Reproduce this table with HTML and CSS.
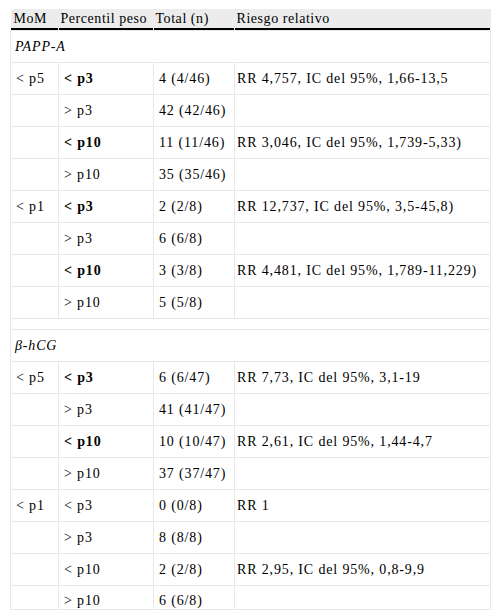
FILE: index.html
```html
<!DOCTYPE html>
<html lang="es">
<head>
<meta charset="utf-8">
<link rel="stylesheet" href="styles.css">
</head>
<body>
<div class="wrap">
<table class="tbl">
  <colgroup>
    <col class="c-mom">
    <col class="c-pct">
    <col class="c-tot">
    <col class="c-rr">
  </colgroup>
  <thead>
    <tr><th>MoM</th><th>Percentil peso</th><th>Total (n)</th><th>Riesgo relativo</th></tr>
  </thead>
  <tbody>
    <tr class="group"><td colspan="4"><i>PAPP-A</i></td></tr>
    <tr><td>&lt; p5</td><td><b>&lt; p3</b></td><td>4 (4/46)</td><td>RR 4,757, IC del 95%, 1,66-13,5</td></tr>
    <tr><td></td><td>&gt; p3</td><td>42 (42/46)</td><td></td></tr>
    <tr><td></td><td><b>&lt; p10</b></td><td>11 (11/46)</td><td>RR 3,046, IC del 95%, 1,739-5,33)</td></tr>
    <tr><td></td><td>&gt; p10</td><td>35 (35/46)</td><td></td></tr>
    <tr><td>&lt; p1</td><td><b>&lt; p3</b></td><td>2 (2/8)</td><td>RR 12,737, IC del 95%, 3,5-45,8)</td></tr>
    <tr><td></td><td>&gt; p3</td><td>6 (6/8)</td><td></td></tr>
    <tr><td></td><td><b>&lt; p10</b></td><td>3 (3/8)</td><td>RR 4,481, IC del 95%, 1,789-11,229)</td></tr>
    <tr><td></td><td>&gt; p10</td><td>5 (5/8)</td><td></td></tr>
    <tr class="spacer"><td colspan="4"></td></tr>
    <tr class="group"><td colspan="4"><i>β-hCG</i></td></tr>
    <tr><td>&lt; p5</td><td><b>&lt; p3</b></td><td>6 (6/47)</td><td>RR 7,73, IC del 95%, 3,1-19</td></tr>
    <tr><td></td><td>&gt; p3</td><td>41 (41/47)</td><td></td></tr>
    <tr><td></td><td><b>&lt; p10</b></td><td>10 (10/47)</td><td>RR 2,61, IC del 95%, 1,44-4,7</td></tr>
    <tr><td></td><td>&gt; p10</td><td>37 (37/47)</td><td></td></tr>
    <tr><td>&lt; p1</td><td>&lt; p3</td><td>0 (0/8)</td><td>RR 1</td></tr>
    <tr><td></td><td>&gt; p3</td><td>8 (8/8)</td><td></td></tr>
    <tr><td></td><td>&lt; p10</td><td>2 (2/8)</td><td>RR 2,95, IC del 95%, 0,8-9,9</td></tr>
    <tr class="last"><td></td><td>&gt; p10</td><td>6 (6/8)</td><td></td></tr>
  </tbody>
</table>
</div>
</body>
</html>
```
FILE: styles.css
```css
html, body {
  margin: 0;
  padding: 0;
  background: #fff;
}
.wrap {
  padding: 9px 10px 0 10px;
}
.tbl {
  width: 480px;
  border-collapse: collapse;
  table-layout: fixed;
  font-family: "Liberation Serif", "Times New Roman", serif;
  font-size: 14px;
  letter-spacing: 0.85px;
  color: #000;
}
.c-mom { width: 48px; }
.c-pct { width: 95px; }
.c-tot { width: 81px; }
.c-rr { width: 256px; }
.tbl th {
  font-weight: normal;
  text-align: left;
  height: 19px;
  padding: 0 2px 2px 2px;
  line-height: 17px;
  letter-spacing: 0.55px;
  background: linear-gradient(#000, #000) left bottom / calc(100% - 1px) 2px no-repeat, #ececec;
  vertical-align: middle;
  border: 0;
  white-space: nowrap;
}
.tbl th:first-child { padding-left: 3px; }
.tbl td {
  border: 1px solid #e8e8e8;
  height: 31px;
  padding: 0 5px;
  line-height: 16px;
  vertical-align: middle;
  white-space: nowrap;
}
.tbl td:last-child { padding-left: 2px; }
.tbl .group td { padding-left: 4px; }
.tbl .spacer td { height: 10px; padding: 0; }
.tbl .last td {
  height: 22px;
  vertical-align: top;
  padding-top: 7px;
  box-sizing: border-box;
}
```
